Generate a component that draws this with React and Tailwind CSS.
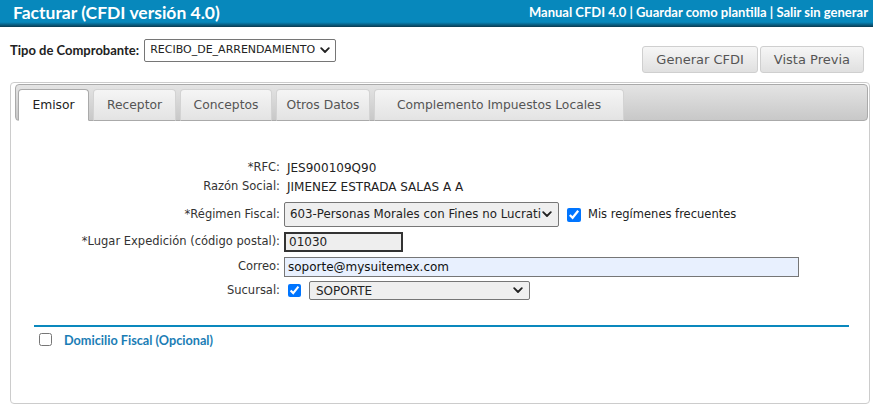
import React from 'react';

const body = { fontFamily: '"DejaVu Sans", Verdana, sans-serif' };
const title = { fontFamily: 'Lato, "Liberation Sans", sans-serif' };

function Chevron({ className = '' }) {
  return (
    <svg viewBox="0 0 10 7" className={`h-[7px] w-[10px] shrink-0 ${className}`}>
      <path d="M1.2 1.2l3.8 3.8 3.8-3.8" fill="none" stroke="#222" strokeWidth="1.8" strokeLinecap="round" strokeLinejoin="round" />
    </svg>
  );
}

function FakeSelect({ value, className = '', textClass = '' }) {
  return (
    <div className={`flex items-center justify-between overflow-hidden border border-[#767676] rounded-[2px] ${className}`}>
      <span className={`whitespace-nowrap overflow-hidden ${textClass}`}>{value}</span>
      <Chevron />
    </div>
  );
}

function Row({ label, children, className = '' }) {
  return (
    <div className={`flex items-center ${className}`}>
      <div className="w-[269px] shrink-0 text-right text-[11.5px] text-[#333]">{label}</div>
      <div className="ml-[4px] flex items-center">{children}</div>
    </div>
  );
}

const tabs = [
  { label: 'Emisor', w: 'w-[71px]' },
  { label: 'Receptor', w: 'w-[83px]' },
  { label: 'Conceptos', w: 'w-[92px]' },
  { label: 'Otros Datos', w: 'w-[94px]' },
  { label: 'Complemento Impuestos Locales', w: 'w-[250px]' },
];

export default function App() {
  return (
    <div className="w-[873px] h-[406px] overflow-hidden bg-white" style={body}>
      <div className="h-[27px] flex items-center justify-between pl-[13px] pr-[5px] bg-[linear-gradient(to_bottom,#0788bc_0%,#0788bc_82%,#0a3a50_100%)] text-white" style={title}>
        <span className="text-[17.5px] font-bold leading-none -mt-[2px]">Facturar (CFDI versión 4.0)</span>
        <span className="text-[13px] font-bold leading-none -mt-[2px]">Manual CFDI 4.0 | Guardar como plantilla | Salir sin generar</span>
      </div>

      <div className="flex justify-between items-start pl-[10px] pr-[9px] pt-[12px]">
        <div className="flex items-center h-[23px]">
          <span className="text-[13px] font-bold text-[#222] mr-[5px]" style={title}>Tipo de Comprobante:</span>
          <FakeSelect value="RECIBO_DE_ARRENDAMIENTO" className="w-[192px] h-[23px] bg-white pl-[5px] pr-[5px]" textClass="text-[11px] text-[#222]" />
        </div>
        <div className="flex gap-[2px] mt-[7px]">
          {['Generar CFDI', 'Vista Previa'].map((b) => (
            <button key={b} className="h-[27px] px-[13px] border border-[#cfcfcf] rounded-[3px] bg-[linear-gradient(to_bottom,#f6f6f6,#e0e0e0)] text-[13px] text-[#555]">{b}</button>
          ))}
        </div>
      </div>

      <div className="ml-[10px] mt-[9px] w-[860px] h-[322px] border border-[#cccccc] rounded-[4px] pt-[1px] pl-[4px] pr-[1px]">
        <div className="h-[37px] border border-[#aaaaaa] rounded-[4px] bg-[linear-gradient(to_bottom,#e4e4e4,#c8c8c8)] flex items-end pl-[2px]">
          <div className="flex gap-[4px] -mb-px">
            {tabs.map((t, i) => (
              <div
                key={t.label}
                className={`${t.w} h-[32px] flex items-center justify-center rounded-t-[4px] text-[12.3px] border ${i === 0 ? 'bg-white border-[#aaaaaa] border-b-white text-[#222]' : 'bg-[linear-gradient(to_bottom,#f5f5f5,#e3e3e3)] border-[#d3d3d3] border-b-[#aaaaaa] text-[#555]'}`}
              >
                {t.label}
              </div>
            ))}
          </div>
        </div>

        <div className="flex flex-col -ml-[4px]">
          <Row label="*RFC:" className="mt-[38px] h-[18px]">
            <span className="pl-[3px] text-[12px] text-[#222]">JES900109Q90</span>
          </Row>
          <Row label="Razón Social:" className="mt-[1px] h-[18px]">
            <span className="pl-[3px] text-[12px] text-[#222]">JIMENEZ ESTRADA SALAS A A</span>
          </Row>
          <Row label="*Régimen Fiscal:" className="mt-[6px] h-[25px]">
            <FakeSelect value="603-Personas Morales con Fines no Lucrati" className="w-[275px] h-[25px] bg-[#efefef] pl-[5px] pr-[6px]" textClass="text-[11.8px] text-[#222] w-[252px]" />
            <input type="checkbox" defaultChecked className="ml-[8px] h-[14px] w-[14px] accent-[#0075ff]" />
            <span className="ml-[7px] text-[11.5px] text-[#222]">Mis regímenes frecuentes</span>
          </Row>
          <Row label="*Lugar Expedición (código postal):" className="mt-[5px] h-[20px]">
            <div className="w-[119px] h-[20px] border-2 border-[#333] bg-[#eeeeee] pl-[3px] flex items-center text-[12px] text-[#222]">01030</div>
          </Row>
          <Row label="Correo:" className="mt-[5px] h-[20px]">
            <div className="w-[515px] h-[20px] border border-[#767676] bg-[#e8f0fe] pl-[3px] flex items-center text-[12px] text-[#111]">soporte@mysuitemex.com</div>
          </Row>
          <Row label="Sucursal:" className="mt-[4px] h-[19px]">
            <input type="checkbox" defaultChecked className="ml-[4px] h-[13px] w-[13px] accent-[#0075ff]" />
            <FakeSelect value="SOPORTE" className="ml-[8px] w-[221px] h-[19px] bg-[#efefef] pl-[6px] pr-[6px]" textClass="text-[12px] text-[#222]" />
          </Row>
        </div>

        <div className="ml-[19px] mr-[19px] mt-[25px] h-[2px] bg-[#0a88bd]" />
        <div className="flex items-center ml-[24px] mt-[4px] h-[16px]">
          <input type="checkbox" className="h-[13px] w-[13px] accent-[#0075ff]" />
          <span className="ml-[12px] mt-[4px] text-[12.7px] font-bold text-[#1a7db5]" style={title}>Domicilio Fiscal (Opcional)</span>
        </div>
      </div>
    </div>
  );
}
